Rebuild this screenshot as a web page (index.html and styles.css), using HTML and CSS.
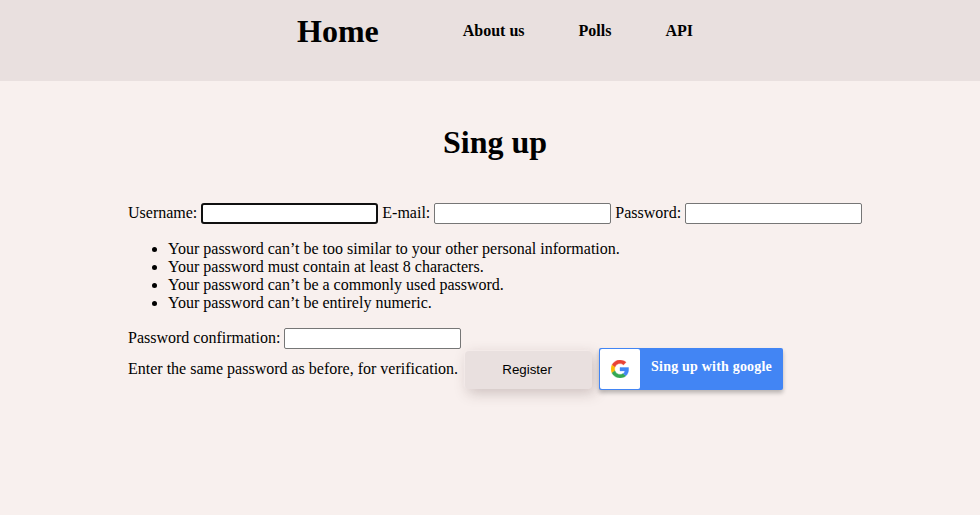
FILE: index.html
```html
<!DOCTYPE html>
<html lang="en">
<head>
<meta charset="utf-8">
<title>Sing up</title>
<link rel="stylesheet" href="styles.css">
</head>
<body>
<header class="nav">
  <a class="nav-home">Home</a>
  <a class="nav-about">About us</a>
  <a class="nav-polls">Polls</a>
  <a>API</a>
</header>
<main class="content">
  <h1>Sing up</h1>
  <form class="form">
    <div class="row fields">
      <label for="u">Username:</label><input id="u" class="focused" type="text">
      <label for="e">E-mail:</label><input id="e" type="text">
      <label for="p">Password:</label><input id="p" type="password">
    </div>
    <ul>
      <li>Your password can’t be too similar to your other personal information.</li>
      <li>Your password must contain at least 8 characters.</li>
      <li>Your password can’t be a commonly used password.</li>
      <li>Your password can’t be entirely numeric.</li>
    </ul>
    <div class="row"><label for="c">Password confirmation:</label><input id="c" type="password"></div>
    <div class="actions">
      <span class="help">Enter the same password as before, for verification.</span>
      <button type="button" class="register">Register</button>
      <a class="google">
        <span class="google-icon">
          <svg width="18" height="18" viewBox="0 0 48 48">
            <path fill="#EA4335" stroke="#EA4335" d="M24 9.5c3.54 0 6.71 1.22 9.21 3.6l6.85-6.85C35.9 2.38 30.47 0 24 0 14.62 0 6.51 5.38 2.56 13.22l7.98 6.19C12.43 13.72 17.74 9.5 24 9.5z"/>
            <path fill="#FBBC05" stroke="#FBBC05" d="M10.53 28.59c-.48-1.45-.76-2.99-.76-4.59s.27-3.14.76-4.59l-7.98-6.19C.92 16.46 0 20.12 0 24c0 3.88.92 7.54 2.56 10.78l7.97-6.19z"/>
            <path fill="#34A853" stroke="#34A853" d="M24 48c6.48 0 11.93-2.13 15.89-5.81l-7.73-6c-2.15 1.45-4.92 2.3-8.16 2.3-6.26 0-11.57-4.22-13.47-9.91l-7.98 6.19C6.51 42.62 14.62 48 24 48z"/>
            <path fill="#4285F4" stroke="#4285F4" d="M46.98 24.55c0-1.57-.15-3.09-.38-4.55H24v9.02h12.94c-.58 2.96-2.26 5.48-4.78 7.18l7.73 6c4.51-4.18 7.09-10.36 7.09-17.65z"/>
          </svg>
        </span>
        <span class="google-text">Sing up with google</span>
      </a>
    </div>
  </form>
</main>
</body>
</html>
```
FILE: styles.css
```css
* { box-sizing: border-box; }
body {
  margin: 0;
  min-height: 515px;
  background: #f8f0ee;
  color: #000;
  font: 16px/18px "Liberation Serif", serif;
}
.nav {
  display: flex;
  align-items: center;
  height: 81px;
  padding: 0 0 19px 297px;
  background: #e9e0df;
  font-weight: bold;
}
.nav-home { margin-right: 84px; font-size: 32px; line-height: 36px; }
.nav-about, .nav-polls { margin-right: 54px; }
.content { padding: 43px 0 0 128px; }
h1 {
  width: 734px;
  margin: 0 0 43px;
  font-size: 32px;
  line-height: 36px;
  text-align: center;
}
.row { display: flex; align-items: center; height: 21px; }
.row label { margin-right: 4px; padding-bottom: 1px; white-space: nowrap; }
input {
  width: 177px;
  height: 21px;
  margin: 0 4px 0 0;
  padding: 1px 2px;
  border: 1px solid #767676;
  border-radius: 2px;
  background: #fff;
}
.focused { border: 2px solid #101010; border-radius: 3px; }
ul { margin: 16px 0; padding-left: 40px; }
.actions { display: flex; align-items: flex-start; height: 43px; }
.help { padding-top: 11px; }
.register {
  width: 127px;
  height: 38px;
  margin: 2px 7px 0;
  padding: 0 3px 2px 0;
  border: 0;
  border-radius: 4px;
  background: #e9e0df;
  box-shadow: -1px -1px 2px rgba(245, 236, 235, .9), 3px 4px 14px rgba(90, 65, 65, .28);
  color: #000;
  font: 13.333px "Liberation Sans", sans-serif;
}
.google {
  display: flex;
  width: 184px;
  height: 42px;
  margin-top: -1px;
  padding: 1px;
  border-radius: 2px;
  background: #4285f4;
  box-shadow: 0 3px 4px rgba(0, 0, 0, .25);
}
.google-icon {
  display: flex;
  align-items: center;
  justify-content: center;
  width: 40px;
  height: 40px;
  border-radius: 2px;
  background: #fff;
}
.google-text {
  padding: 9px 0 0 11px;
  color: #fff;
  font-size: 14px;
  font-weight: bold;
  letter-spacing: .2px;
  white-space: nowrap;
}
```
